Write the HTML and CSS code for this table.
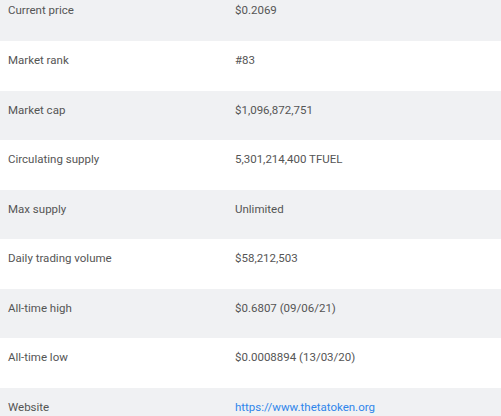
FILE: index.html
```html
<!DOCTYPE html>
<html>
<head>
<meta charset="utf-8">
<link rel="stylesheet" href="styles.css">
</head>
<body>
<div class="stats">
  <div class="row"><div class="label">Current price</div><div class="value">$0.2069</div></div>
  <div class="row"><div class="label">Market rank</div><div class="value">#83</div></div>
  <div class="row"><div class="label">Market cap</div><div class="value">$1,096,872,751</div></div>
  <div class="row"><div class="label">Circulating supply</div><div class="value">5,301,214,400 TFUEL</div></div>
  <div class="row"><div class="label">Max supply</div><div class="value">Unlimited</div></div>
  <div class="row"><div class="label">Daily trading volume</div><div class="value">$58,212,503</div></div>
  <div class="row"><div class="label">All-time high</div><div class="value">$0.6807 (09/06/21)</div></div>
  <div class="row"><div class="label">All-time low</div><div class="value">$0.0008894 (13/03/20)</div></div>
  <div class="row"><div class="label">Website</div><div class="value"><a class="link" href="#">https://www.thetatoken.org</a></div></div>
</div>
</body>
</html>
```
FILE: styles.css
```css
html, body {
  margin: 0;
  padding: 0;
  background: #ffffff;
  overflow: hidden;
}
.stats {
  margin-top: -8.6px;
  font-family: Roboto, sans-serif;
  font-size: 11.5px;
  color: #555555;
}
.row {
  display: grid;
  grid-template-columns: 227px 1fr;
  height: 49.57px;
  box-sizing: border-box;
  padding: 11px 8px 0 8px;
  line-height: 16px;
}
.row:nth-child(odd) {
  background: #f0f1f3;
}
.link {
  color: #2f86eb;
  text-decoration: none;
}
```
